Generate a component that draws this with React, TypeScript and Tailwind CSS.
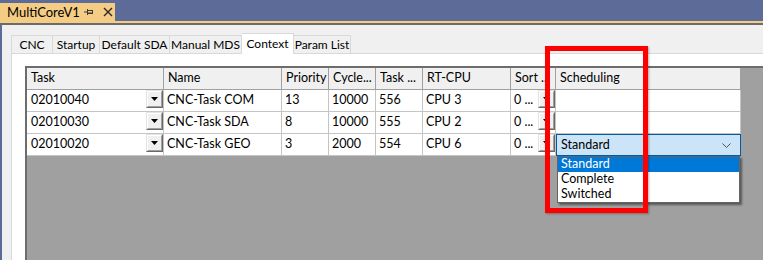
import React from 'react';

const widths = [137, 118, 47, 47, 47, 88, 45, 185];
const headers = ['Task', 'Name', 'Priority', 'Cycle...', 'Task ...', 'RT-CPU', 'Sort ...', 'Scheduling'];
const rows = [
  ['02010040', 'CNC-Task COM', '13', '10000', '556', 'CPU 3'],
  ['02010030', 'CNC-Task SDA', '8', '10000', '555', 'CPU 2'],
  ['02010020', 'CNC-Task GEO', '3', '2000', '554', 'CPU 6'],
];

function DropBtn() {
  return (
    <div className="w-[17px] h-[18px] shrink-0 border border-t-[#e3e3e3] border-l-[#e3e3e3] border-r-[#696969] border-b-[#696969]">
      <div className="w-full h-full bg-[#f0f0f0] border border-t-white border-l-white border-r-[#a0a0a0] border-b-[#a0a0a0] flex items-center justify-center">
        <svg width="7" height="4" viewBox="0 0 7 4">
          <polygon points="0,0 7,0 3.5,4" fill="#000" />
        </svg>
      </div>
    </div>
  );
}

function Tab({ label, w, selected, first }: { label: string; w: number; selected?: boolean; first?: boolean }) {
  if (selected) {
    return (
      <div
        style={{ width: w }}
        className="h-[21px] -mb-[1px] bg-white border-t border-r border-[#d9d9d9] relative z-10 flex items-center justify-center pb-[1px] whitespace-nowrap"
      >
        {label}
      </div>
    );
  }
  return (
    <div
      style={{ width: w }}
      className={`h-[18px] bg-[#f0f0f0] border-t border-r border-[#d9d9d9] flex items-center justify-center whitespace-nowrap ${first ? 'border-l' : ''}`}
    >
      {label}
    </div>
  );
}

export default function App() {
  return (
    <div className="relative w-[763px] h-[260px] overflow-hidden bg-[#5d6b99] flex flex-col font-['Lato',sans-serif] text-[12.5px] text-black leading-none">
      {/* title strip */}
      <div className="h-[21px] shrink-0 flex items-end">
        <div className="h-[18px] w-[115px] bg-[#f5cc84] flex items-center pl-[7px]">
          <span className="text-[13px]">MultiCoreV1</span>
          <svg className="ml-[4px]" width="10" height="8" viewBox="0 0 10 8">
            <line x1="0" y1="4" x2="3" y2="4" stroke="#3a3a3a" strokeWidth="1" />
            <line x1="3.5" y1="1" x2="3.5" y2="7" stroke="#3a3a3a" strokeWidth="1" />
            <rect x="3.5" y="2.5" width="5" height="3" fill="none" stroke="#3a3a3a" strokeWidth="1" />
            <line x1="4" y1="5" x2="9" y2="5" stroke="#3a3a3a" strokeWidth="1" />
          </svg>
          <svg className="ml-[9px]" width="10" height="10" viewBox="0 0 10 10">
            <path d="M1 1 L9 9 M9 1 L1 9" stroke="#2a2a2a" strokeWidth="1.4" />
          </svg>
        </div>
      </div>
      <div className="h-[2px] shrink-0 bg-[#f5cc84]" />
      <div className="h-[2px] shrink-0 bg-[#6b6b6b]" />

      {/* body */}
      <div className="flex-1 flex min-h-0">
        <div className="w-[2px] bg-[#5d6b99]" />
        <div className="flex-1 bg-[#f0f0f0] pl-[9px] pt-[8px] flex flex-col min-h-0">
          {/* tabs */}
          <div className="flex items-end h-[20px] shrink-0 text-[12px]">
            <Tab label="CNC" w={42} first />
            <Tab label="Startup" w={47} />
            <Tab label="Default SDA" w={70} />
            <Tab label="Manual MDS" w={72} />
            <Tab label="Context" w={52} selected />
            <Tab label="Param List" w={57} />
          </div>
          {/* panel */}
          <div className="flex-1 bg-white border-l border-t border-[#d9d9d9] pl-[13px] pt-[12px] flex flex-col min-h-0">
            <div className="flex-1 bg-[#a0a0a0] border-l-2 border-t-2 border-l-[#6d6d6d] border-t-[#6d6d6d] flex flex-col">
              {/* header */}
              <div className="flex">
                {headers.map((h, i) => (
                  <div
                    key={i}
                    style={{ width: widths[i] }}
                    className="h-[22px] bg-[#f0f0f0] border-r border-b border-[#a0a0a0] flex items-center pl-[4px] whitespace-nowrap overflow-hidden"
                  >
                    {h}
                  </div>
                ))}
              </div>
              {rows.map((r, ri) => (
                <div key={ri} className="flex">
                  <div
                    style={{ width: widths[0] }}
                    className="h-[22px] bg-white border-r border-b border-[#c4c4c4] flex items-start pl-[4px]"
                  >
                    <span className="flex-1 self-center">{r[0]}</span>
                    <DropBtn />
                  </div>
                  {r.slice(1).map((c, ci) => (
                    <div
                      key={ci}
                      style={{ width: widths[ci + 1] }}
                      className="h-[22px] bg-white border-r border-b border-[#c4c4c4] flex items-center pl-[3px] whitespace-nowrap"
                    >
                      {c}
                    </div>
                  ))}
                  <div
                    style={{ width: widths[6] }}
                    className="h-[22px] bg-white border-r border-b border-[#c4c4c4] flex items-start pl-[3px]"
                  >
                    <span className="flex-1 self-center whitespace-nowrap">0 ...</span>
                    <DropBtn />
                  </div>
                  <div
                    style={{ width: widths[7] }}
                    className="relative h-[22px] bg-white border-r border-b border-[#c4c4c4]"
                  >
                    {ri === 2 && (
                      <div className="absolute left-0 top-0 -right-[1px] -bottom-[1px] bg-[#cce4f7] border border-[#005ba1] flex items-center pl-[4px] pr-[9px]">
                        <span className="flex-1">Standard</span>
                        <svg width="9" height="5" viewBox="0 0 9 5">
                          <path d="M0.5 0.5 L4.5 4.5 L8.5 0.5" fill="none" stroke="#505050" strokeWidth="1" />
                        </svg>
                      </div>
                    )}
                  </div>
                </div>
              ))}
            </div>
          </div>
        </div>
      </div>

      {/* dropdown list */}
      <div className="absolute left-[557px] top-[156px] w-[183px] h-[47px] bg-white border border-[#646464] shadow-[2px_2px_2px_rgba(0,0,0,0.45)] flex flex-col">
        <div className="h-[15px] bg-[#0078d7] text-white flex items-center pl-[3px]">Standard</div>
        <div className="h-[15px] flex items-center pl-[3px]">Complete</div>
        <div className="h-[15px] flex items-center pl-[3px]">Switched</div>
      </div>

      {/* red highlight */}
      <div className="absolute left-[545px] top-[46px] w-[103px] h-[167px] border-[5px] border-[#ff0000] shadow-[1px_1px_2px_rgba(0,0,0,0.3)]" />
    </div>
  );
}
